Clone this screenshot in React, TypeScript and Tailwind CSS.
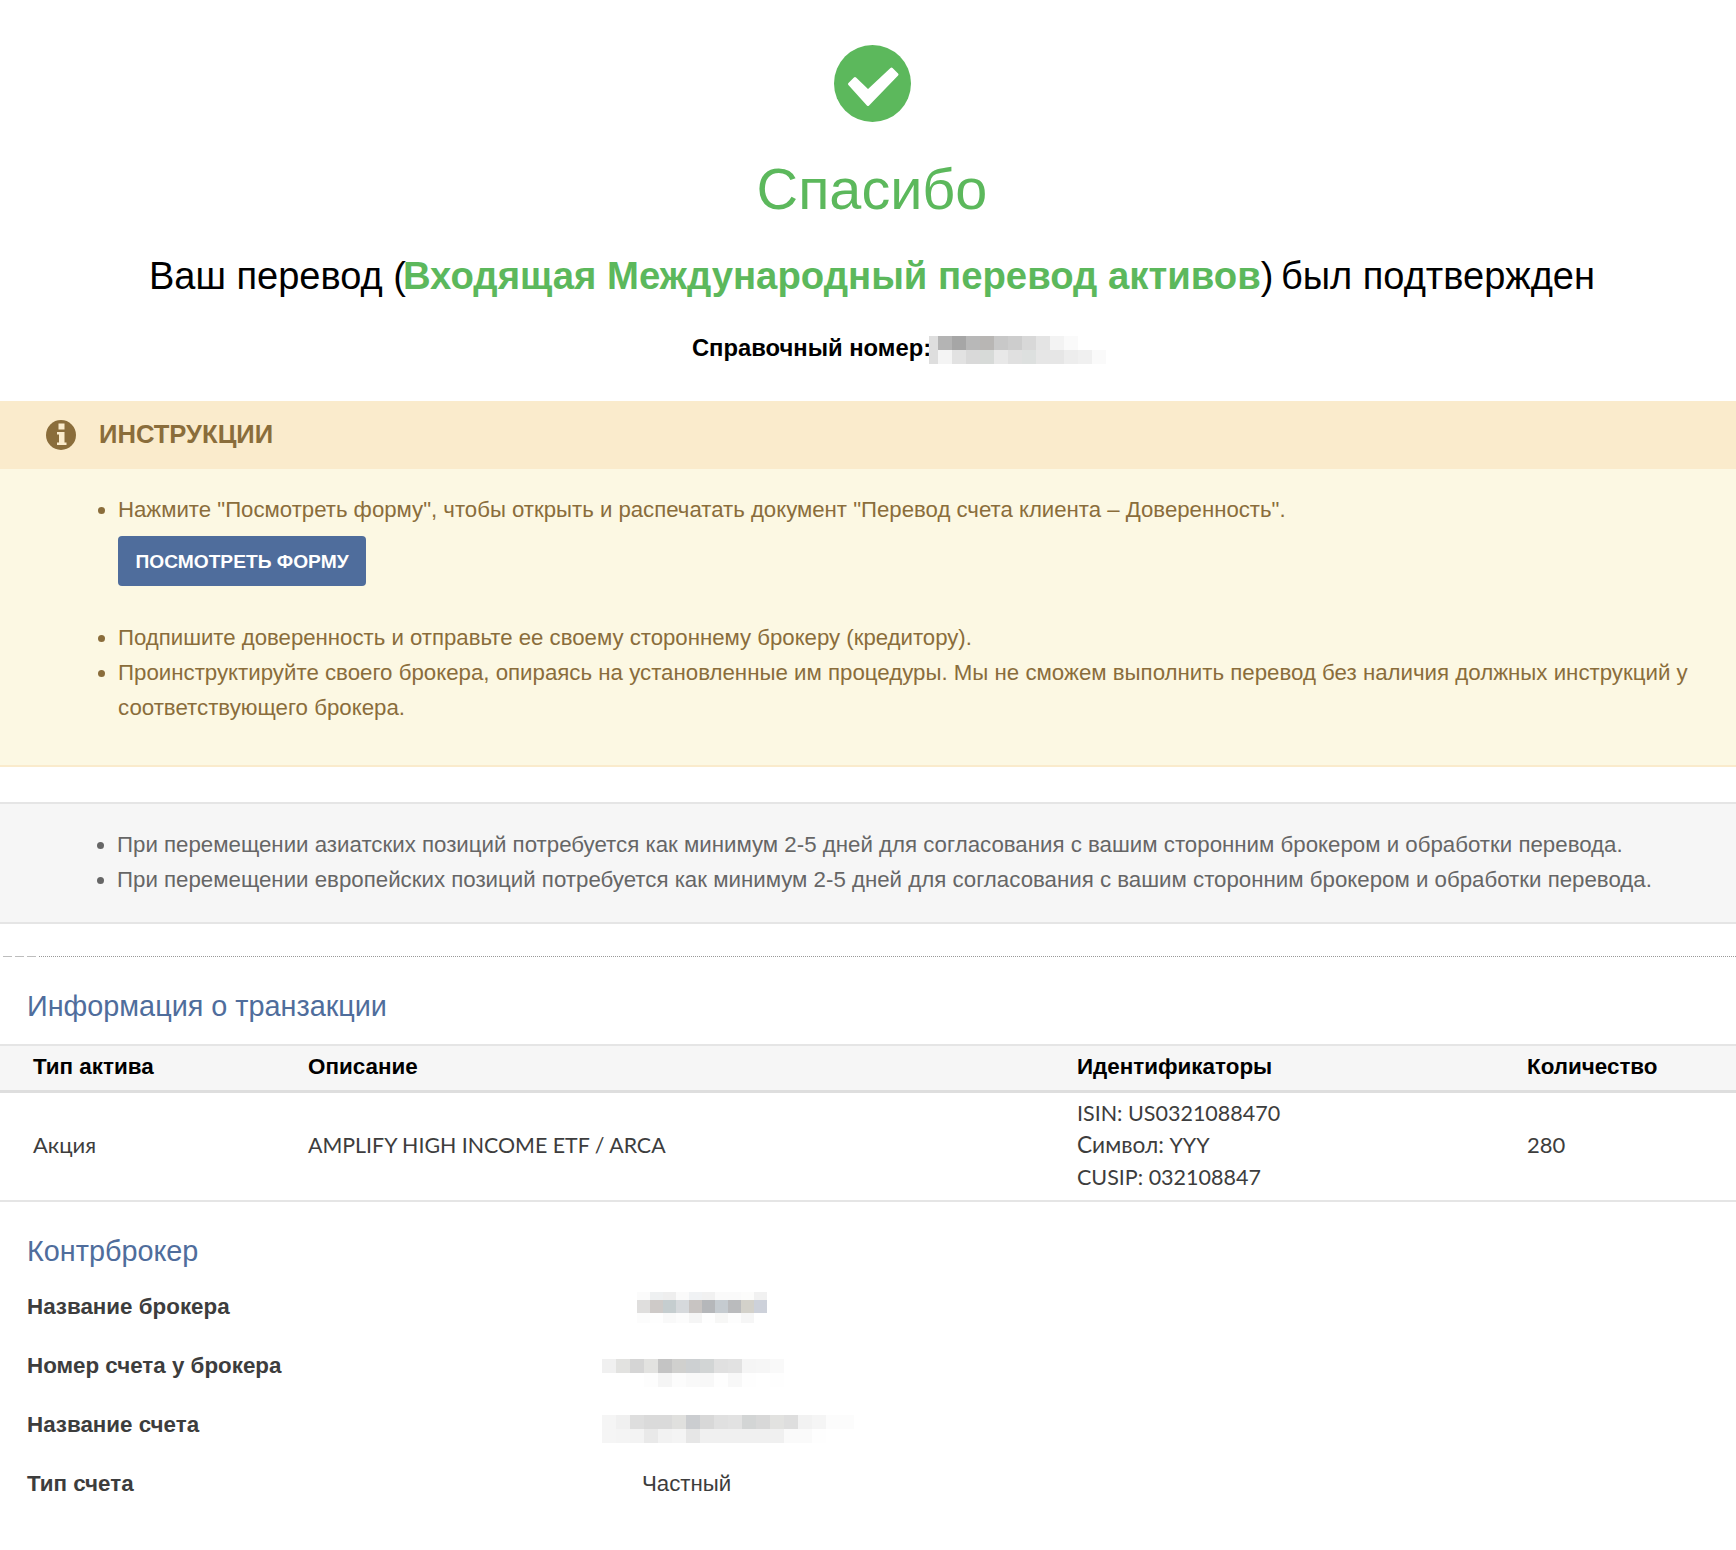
const SANS = "font-['Liberation_Sans',Arial,sans-serif]";

function Mosaic({ x = 0, w, h, cell, rows, heights, className = "" }: { x?: number; w: number; h: number; cell: number; rows: string[][]; heights: number[]; className?: string }) {
  let y = 0;
  const out: React.ReactNode[] = [];
  rows.forEach((r, j) => {
    r.forEach((c, i) => out.push(<rect key={`${i}-${j}`} x={x + i * cell} y={y} width={cell} height={heights[j]} fill={c} />));
    y += heights[j];
  });
  return (
    <svg width={w} height={h} className={className} shapeRendering="crispEdges">
      {out}
    </svg>
  );
}

function Detail({ label, children }: { label: string; children: React.ReactNode }) {
  return (
    <div className="flex h-[59px] items-center">
      <div className="w-[637px] pl-[27px] text-[22.37px] font-bold">{label}</div>
      <div className="flex-1">{children}</div>
    </div>
  );
}

export default function App() {
  return (
    <div className={`${SANS} h-[1550px] bg-white text-[22.27px] leading-[35px] text-[#3d3d3d]`}>
      <div className="flex flex-col items-center pl-[8px] pt-[45px]">
        <svg viewBox="0 0 77 77" className="h-[77px] w-[77px]">
          <circle cx="38.5" cy="38.5" r="38.5" fill="#5cb85c" />
          <path d="M15.500 39L21 33.500L34 46L57.500 24L63 29.500L34 59.500Z" fill="#fff" stroke="#fff" strokeWidth="3" strokeLinejoin="round" />
        </svg>
        <div className="mt-[35px] text-[57.6px] leading-[64px] text-[#5cb85c]">Спасибо</div>
        <div className="mt-[30px] text-[38px] leading-[50px] text-black">
          Ваш перевод <span className="tracking-[-3px]">(</span><b className="text-[38.3px] text-[#5cb85c]">Входящая Международный перевод активов</b><span className="tracking-[-3px]">)</span> был подтвержден
        </div>
        <div className="mt-[28px] flex h-[36px] items-center text-[23.8px] font-bold text-black">
          Справочный номер:
          <Mosaic w={177} h={28} cell={14} x={-5} heights={[14, 14]} className="-ml-[2px] -mr-[54px] mt-[6px]" rows={[
            ["#dedede","#b4b4b4","#a6a6a6","#b8b8b8","#b8b6b4","#c8c8c8","#cdcdcd","#d8d8d8","#e4e4e4","#f3f3f3","#fafafa","#ffffff","#ffffff"],
            ["#dedede","#f4f4f4","#e2e2e2","#d9d9d9","#d7dad8","#e8e8e8","#e0e0e0","#dde0df","#e6e6e6","#e6e6e6","#ededed","#f0f0f0","#fafafa"],
          ]} />
        </div>
      </div>

      <div className="mt-[36px] border-b-2 border-[#faebcc] bg-[#fcf8e3] text-[#8a6d3b]">
        <div className="flex h-[68px] items-center bg-[#faebcc] pl-[46px]">
          <svg viewBox="0 0 30 30" className="h-[30px] w-[30px]">
            <circle cx="15" cy="15" r="15" fill="#8a6d3b" />
            <path d="M12.500 3.500h6v6h-6zM11 12h7.500v10.500h2v2.500h-9.500v-2.500h2v-8h-2z" fill="#faebcc" />
          </svg>
          <span className="ml-[23px] pb-[2px] text-[25.6px] font-bold">ИНСТРУКЦИИ</span>
        </div>
        <ul className="list-disc pb-[40px] pl-[118px] pr-[40px] pt-[23px]">
          <li className="text-[22.2px]">
            Нажмите "Посмотреть форму", чтобы открыть и распечатать документ "Перевод счета клиента – Доверенность".
            <button className="mb-[34px] mt-[9px] block h-[50px] w-[248px] rounded-[4px] bg-[#4f6d9c] text-[19.2px] font-bold text-white">ПОСМОТРЕТЬ ФОРМУ</button>
          </li>
          <li className="text-[22.2px]">Подпишите доверенность и отправьте ее своему стороннему брокеру (кредитору).</li>
          <li>Проинструктируйте своего брокера, опираясь на установленные им процедуры. Мы не сможем выполнить перевод без наличия должных инструкций у соответствующего брокера.</li>
        </ul>
      </div>

      <div className="mt-[35px] border-y-2 border-[#e5e5e5] bg-[#f6f6f6] text-[#666666]">
        <ul className="list-disc pb-[25px] pl-[117px] pt-[23px]">
          <li>При перемещении азиатских позиций потребуется как минимум 2-5 дней для согласования с вашим сторонним брокером и обработки перевода.</li>
          <li>При перемещении европейских позиций потребуется как минимум 2-5 дней для согласования с вашим сторонним брокером и обработки перевода.</li>
        </ul>
      </div>

      <div className="mt-[32px] flex items-center">
        <span className="ml-[3px] h-px w-[9px] bg-[#bdbdbd]" />
        <span className="ml-[3px] h-px w-[9px] bg-[#bdbdbd]" />
        <span className="ml-[3px] h-px w-[9px] bg-[#bdbdbd]" />
        <span className="ml-[3px] flex-1 border-t border-dotted border-[#999999]" />
      </div>

      <h3 className="mt-[29px] pl-[27px] text-[28.8px] leading-[40px] text-[#4f6d9c]">Информация о транзакции</h3>

      <div className="mt-[18px] grid grid-cols-[308px_769px_450px_1fr] border-b-[3px] border-t-2 border-b-[#dedede] border-t-[#e5e5e5] bg-[#f6f6f6] pb-[2px] pl-[33px] text-[22.4px] font-bold leading-[42px] text-black">
        <div>Тип актива</div>
        <div className="-ml-[33px]">Описание</div>
        <div className="-ml-[33px]">Идентификаторы</div>
        <div className="-ml-[33px]">Количество</div>
      </div>
      <div className="grid h-[109px] grid-cols-[308px_769px_450px_1fr] items-center border-b-2 border-[#e5e5e5] pb-[3px] pl-[33px] font-['Lato',sans-serif] text-[21.5px] leading-[32px]">
        <div className="text-[22px]">Акция</div>
        <div className="-ml-[33px] text-[21.37px]">AMPLIFY HIGH INCOME ETF / ARCA</div>
        <div className="-ml-[33px]">
          <div>ISIN: US0321088470</div>
          <div><span className="text-[22.7px]">Символ:</span> YYY</div>
          <div>CUSIP: 032108847</div>
        </div>
        <div className="-ml-[33px] text-[22px]">280</div>
      </div>

      <h3 className="mt-[29px] pl-[27px] text-[28.8px] leading-[40px] text-[#4f6d9c]">Контрброкер</h3>
      <div className="mt-[6px]">
        <Detail label="Название брокера">
          <Mosaic w={130} h={31} cell={13} heights={[8, 13, 10]} className="mt-[2px]" rows={[
            ["#fbfbfb","#eef0f1","#eeeeee","#fafafa","#f0f2f4","#f1f1f1","#fafafa","#fafafa","#fcfcfb","#f1f1f1"],
            ["#dfdedd","#cecac8","#c5cdcf","#d6d9dc","#c8c4c2","#b5b7ba","#c5cbd0","#babbbd","#d3d1ca","#cdd1da"],
            ["#fcfcfc","#fefefe","#f9f9f9","#fcfcfc","#f5f5f5","#fefefe","#f7f7f6","#fdfdfd","#f6f6f6","#ffffff"],
          ]} />
        </Detail>
        <Detail label="Номер счета у брокера">
          <Mosaic w={182} h={28} cell={14} heights={[14, 14]} className="-ml-[35px] mt-[14px]" rows={[
            ["#f0f0f0","#e2e2e0","#d5d5d5","#e2e2e0","#c4c4c4","#d0d0ce","#cdd0d2","#d2d5d5","#e0e0e0","#e2e2e2","#f5f5f5","#f6f6f6","#f9f9f9"],
            ["#ffffff","#ffffff","#ffffff","#fdfdfd","#f5f5f5","#fcfcfc","#f9f9f9","#f8f8f8","#fefefe","#f8f8f8","#fefefe","#ffffff","#fefefe"],
          ]} />
        </Detail>
        <Detail label="Название счета">
          <Mosaic w={252} h={28} cell={14} heights={[14, 14]} className="-ml-[35px] mt-[8px]" rows={[
            ["#f5f5f5","#f0f0f0","#dedede","#dadada","#dadada","#e0e0de","#cbcdd0","#d8d8d8","#e0e0e0","#e2e2e2","#d3d5d5","#d8d8d8","#e2e2e0","#dedede","#f2f2f2","#f5f5f5","#fcfcfc","#fcfcfc"],
            ["#f5f5f5","#f4f4f4","#f3f3f3","#e9e9e9","#f2f2f2","#f4f4f4","#e6e6e6","#f0f0f0","#f0f0f0","#f0f0f0","#f0f0f0","#f0f0f0","#f0f0f0","#fafafa","#fafafa","#fefefe","#ffffff","#ffffff"],
          ]} />
        </Detail>
        <Detail label="Тип счета">
          <span className="ml-[5px]">Частный</span>
        </Detail>
      </div>
    </div>
  );
}
